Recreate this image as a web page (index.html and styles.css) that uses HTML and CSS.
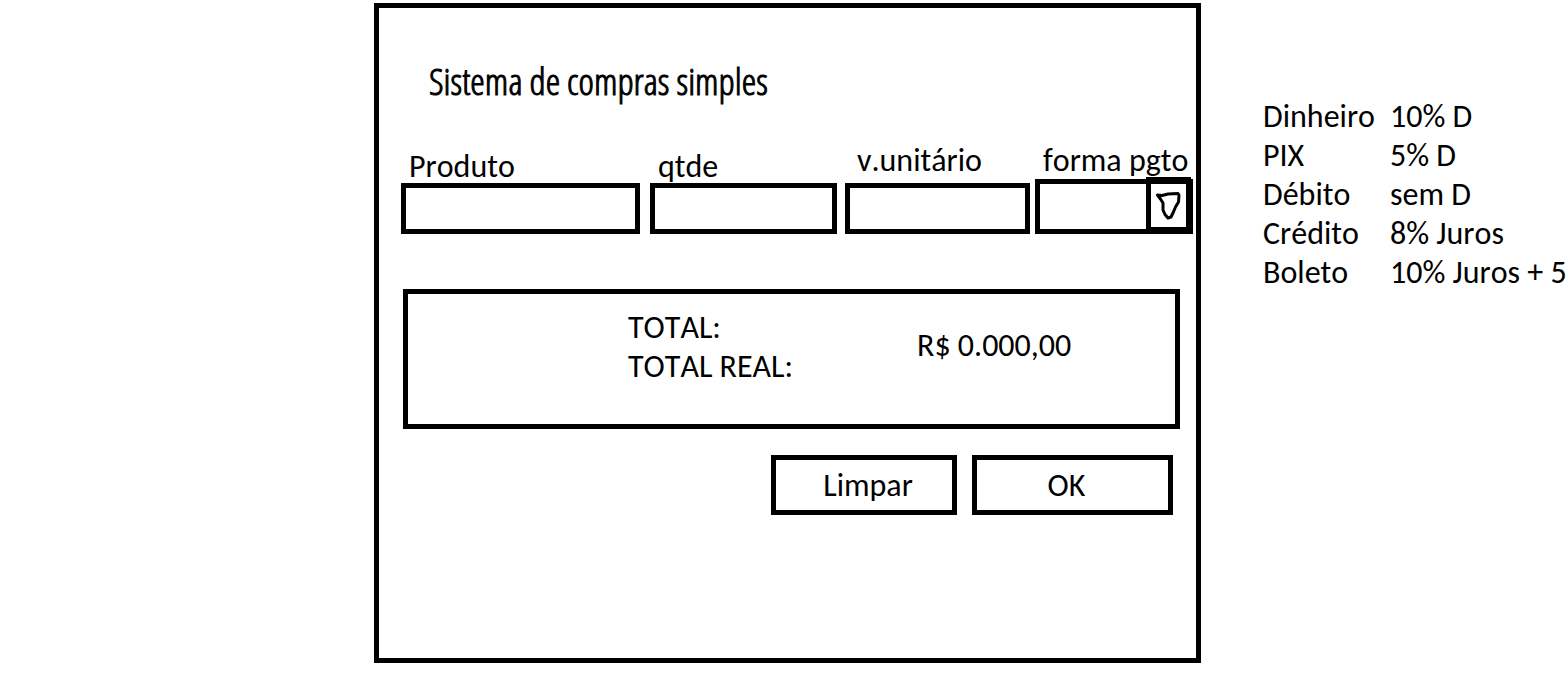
FILE: index.html
```html
<!DOCTYPE html>
<html lang="pt-BR">
<head>
<meta charset="utf-8">
<meta name="viewport" content="width=device-width, initial-scale=1">
<title>Sistema de compras simples</title>
<link rel="stylesheet" href="styles.css">
</head>
<body>
<div class="page">
  <main class="panel">
    <h1 class="title">Sistema de compras simples</h1>
    <form class="form">
      <div class="fields">
        <div class="field field-product">
          <label class="label" for="produto">Produto</label>
          <input class="box" id="produto" type="text">
        </div>
        <div class="field field-quantity">
          <label class="label" for="qtde">qtde</label>
          <input class="box" id="qtde" type="text">
        </div>
        <div class="field field-price">
          <label class="label" for="unitario">v.unitário</label>
          <input class="box" id="unitario" type="text">
        </div>
        <div class="field field-payment">
          <label class="label" for="pgto">forma pgto</label>
          <div class="picker">
            <select class="box picker-select" id="pgto">
              <option></option>
              <option>Dinheiro</option>
              <option>PIX</option>
              <option>Débito</option>
              <option>Crédito</option>
              <option>Boleto</option>
            </select>
            <span class="picker-arrow">
              <svg width="35" height="45" viewBox="0 0 35 45" fill="none" stroke="#000" stroke-width="3" stroke-linecap="round" stroke-linejoin="round" aria-hidden="true">
                <path d="M6.500 13 L11 13.500 L17 12 L27 11.500 L28 13 L27.500 20 L24.500 25 L22 31 L20 35 L17 36 L14 32.500 L12 28 L12 21 L9.500 17 Z"/>
              </svg>
            </span>
          </div>
        </div>
      </div>
      <section class="totals">
        <div class="totals-names">
          <div>TOTAL:</div>
          <div>TOTAL REAL:</div>
        </div>
        <output class="totals-value">R$ 0.000,00</output>
      </section>
      <div class="actions">
        <button class="button button-clear" type="reset">Limpar</button>
        <button class="button button-ok" type="button">OK</button>
      </div>
    </form>
  </main>
  <aside class="notes">
    <table class="rates">
      <tr><th scope="row">Dinheiro</th><td>10% D</td></tr>
      <tr><th scope="row">PIX</th><td>5% D</td></tr>
      <tr><th scope="row">Débito</th><td>sem D</td></tr>
      <tr><th scope="row">Crédito</th><td>8% Juros</td></tr>
      <tr><th scope="row">Boleto</th><td>10% Juros + 5</td></tr>
    </table>
  </aside>
</div>
</body>
</html>
```
FILE: styles.css
```css
* {
  box-sizing: border-box;
}

body {
  margin: 0;
  background: #fff;
  color: #000;
  font-family: Carlito, Lato, "Open Sans", sans-serif;
  font-size: 32px;
  font-kerning: none;
  line-height: 39px;
}

.page {
  display: grid;
  grid-template-columns: 374fr 827fr 366fr;
  padding: 3px 0 18px;
}

.panel {
  grid-column: 2;
  min-width: 0;
  min-height: calc(100vh - 21px);
  border: 5px solid #000;
  padding: 50px 3px 0 22px;
}

.title {
  margin: 0 0 40px;
  padding-left: 28px;
  font-family: "Open Sans Condensed Light", "Open Sans Condensed", "Liberation Sans Narrow", Lato, sans-serif;
  font-size: 37px;
  font-weight: 300;
  line-height: 45px;
  -webkit-text-stroke: 1px #000;
}

.fields {
  display: flex;
  align-items: flex-end;
}

.field {
  display: flex;
  flex-direction: column;
  min-width: 0;
}

.field-product {
  flex: 239;
  margin-right: 10px;
}

.field-quantity {
  flex: 187;
  margin-right: 8px;
}

.field-price {
  flex: 185;
  margin-right: 5px;
}

.field-payment {
  flex: 158;
}

.label {
  padding-left: 8px;
  line-height: 32px;
  white-space: nowrap;
}

.field-price .label {
  padding-left: 12px;
  margin-bottom: 6px;
}

.field-payment .label {
  margin-bottom: 2px;
}

.box {
  display: block;
  width: 100%;
  height: 51px;
  border: 5px solid #000;
  border-radius: 0;
  padding: 0 8px;
  background: #fff;
  color: inherit;
  font: inherit;
}

.picker {
  position: relative;
}

.picker-select {
  height: 55px;
  appearance: none;
}

.picker-arrow {
  position: absolute;
  top: -2px;
  right: 2px;
  border: 5px solid #000;
  line-height: 0;
  pointer-events: none;
}

.form {
  padding-top: 2px;
}

.totals {
  display: flex;
  min-height: 140px;
  margin: 55px 13px 0 2px;
  border: 5px solid #000;
  padding: 14px 0 0 220px;
}

.totals-names {
  flex: 289;
}

.totals-value {
  flex: 258;
  margin-top: 18px;
}

.actions {
  display: flex;
  justify-content: flex-end;
  gap: 15px;
  margin: 26px 20px 0 0;
}

.button {
  height: 60px;
  border: 5px solid #000;
  padding: 0;
  background: #fff;
  color: inherit;
  font: inherit;
  font-kerning: none;
}

.button-clear {
  width: 186px;
  padding-left: 8px;
}

.button-ok {
  width: 201px;
  padding-right: 12px;
}

.notes {
  padding: 94px 0 0 62px;
}

.rates {
  border-collapse: collapse;
  white-space: nowrap;
}

.rates th {
  width: 127px;
  padding: 0;
  font-weight: 400;
  text-align: left;
}

.rates td {
  padding: 0;
}
```
